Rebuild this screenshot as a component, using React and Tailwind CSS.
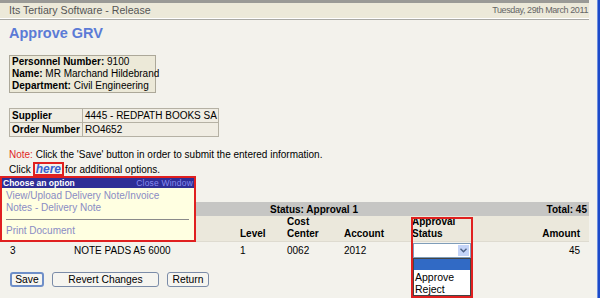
import React from "react";

function Chevron() {
  return (
    <svg width="7" height="5" viewBox="0 0 7 5">
      <path d="M0.5 0.8 L3.5 3.8 L6.5 0.8" fill="none" stroke="#4d6185" strokeWidth="1.4" />
    </svg>
  );
}

export default function App() {
  return (
    <div className="w-[600px] h-[298px] overflow-hidden flex bg-[#f3f2ec] [font-family:'Liberation_Sans',Arial,sans-serif] text-[10px] text-black">
      <div className="relative w-[597px] h-full">
        <div className="w-[589px]">
          <div className="h-[3px] bg-[#9a9a96]" />
          <div className="h-[15px] bg-[#ece9d9] flex items-center justify-between pl-[9px] pr-[1px]">
            <span className="text-[10.6px] text-[#555]">Its Tertiary Software - Release</span>
            <span className="text-[9px] tracking-[-0.4px] text-[#666]">Tuesday, 29th March 2011</span>
          </div>
          <div className="h-[1px] bg-white" />
          <div className="h-[1px] bg-[#a9a9a4]" />
        </div>

        <div className="pl-[9px]">
          <div className="pt-[4px] h-[35px] text-[14.5px] leading-[18px] font-bold text-[#5b7bd6]">Approve GRV</div>

          <div className="w-[147px] border border-[#aca899] bg-[#ece9d8] px-[2px] leading-[12px] whitespace-nowrap">
            <div><b>Personnel Number:</b> 9100</div>
            <div><b>Name:</b> MR Marchand Hildebrand</div>
            <div><b>Department:</b> Civil Engineering</div>
          </div>

          <div className="mt-[15px] w-[210px] border border-[#b5b1a4] bg-[#f0ede3] grid grid-cols-[73px_1fr] leading-[13px] whitespace-nowrap">
            <div className="border-r border-b border-[#b5b1a4] px-[2px] font-bold">Supplier</div>
            <div className="border-b border-[#b5b1a4] px-[2px]">4445 - REDPATH BOOKS SA</div>
            <div className="border-r border-[#b5b1a4] px-[2px] font-bold">Order Number</div>
            <div className="px-[2px]">RO4652</div>
          </div>

          <div className="mt-[11px] h-[14px] leading-[14px] whitespace-nowrap">
            <span className="text-[#e02828]">Note:</span> Click the 'Save' button in order to submit the entered information.
          </div>
          <div className="h-[14px] flex items-center whitespace-nowrap">
            <span>Click</span>
            <span className="ml-[2px] mr-[1px] border-2 border-[#e02020] px-[1px] leading-[10px] text-[12px] font-bold italic text-[#3a5fd0]">here</span>
            <span>for additional options.</span>
          </div>
        </div>

        {/* Items table */}
        <div className="mt-[26px] ml-[9px] w-[580px] whitespace-nowrap">
          <div className="h-[14px] bg-[#c6c6c4] flex items-center font-bold pr-[2px]">
            <span className="ml-[261px]">Status: Approval 1</span>
            <span className="ml-auto">Total: 45</span>
          </div>
          <div className="h-[26px] bg-[#ebe8dc] border-b border-[#dedbd0] grid grid-cols-[65px_166px_47px_57px_68px_64px_1fr] items-end font-bold leading-[12px] pb-[1px]">
            <div />
            <div />
            <div>Level</div>
            <div>Cost<br />Center</div>
            <div>Account</div>
            <div>Approval<br />Status</div>
            <div className="text-right pr-[9px]">Amount</div>
          </div>
          <div className="h-[16px] grid grid-cols-[65px_166px_47px_57px_68px_64px_1fr] items-center">
            <div className="pl-[1px]">3</div>
            <div>NOTE PADS A5 6000</div>
            <div>1</div>
            <div>0062</div>
            <div>2012</div>
            <div className="relative">
              <div className="ml-[1px] w-[58px] h-[15px] bg-white border border-[#7f9db9] flex justify-end p-[1px]">
                <div className="w-[11px] h-full bg-[#c4d4f8] flex items-center justify-center">
                  <Chevron />
                </div>
              </div>
              <div className="absolute left-[1px] top-[15px] w-[58px] h-[38px] bg-white border border-[#444] text-[10.5px] leading-[12.5px]">
                <div className="h-[11px] bg-[#316ac5]" />
                <div className="pl-[1px] pt-[1px]">Approve</div>
                <div className="pl-[1px]">Reject</div>
              </div>
            </div>
            <div className="text-right pr-[9px]">45</div>
          </div>

          <div className="mt-[14px] ml-[1px] flex gap-[8px] text-[10.3px]">
            <button className="w-[34px] h-[15px] rounded-[3px] border-2 border-[#6f8fc8] bg-[#f6f5f0] leading-[11px]">Save</button>
            <button className="w-[107px] h-[15px] rounded-[3px] border border-[#7b8ca8] bg-[#f6f5f0] leading-[13px]">Revert Changes</button>
            <button className="w-[42px] h-[15px] rounded-[3px] border border-[#7b8ca8] bg-[#f6f5f0] leading-[13px]">Return</button>
          </div>
        </div>

        {/* Red highlight on Approval Status column */}
        <div className="absolute left-[411px] top-[217px] w-[62px] h-[81px] border-2 border-[#e02020] pointer-events-none" />

        {/* Popup */}
        <div className="absolute left-0 top-[176px] w-[196px] h-[66px] border-2 border-[#e02020] bg-[#ffffe1] whitespace-nowrap">
          <div className="h-[10px] bg-[#2e2e96] flex items-center justify-between px-[1px] text-[8.5px] leading-[10px]">
            <span className="font-bold text-white">Choose an option</span>
            <span className="text-[#8a8cf0] tracking-[0.2px]">Close Window</span>
          </div>
          <div className="px-[4px] pt-[2px] text-[#8a8cc4] leading-[12px]">
            <div>View/Upload Delivery Note/Invoice</div>
            <div>Notes - Delivery Note</div>
            <div className="my-[5px] h-[1px] bg-[#8a8a8a] mr-[1px]" />
            <div>Print Document</div>
          </div>
        </div>
      </div>
      <div className="w-[3px] h-full bg-[#1c4ac8] border-l border-[#6d8fe0]" />
    </div>
  );
}
